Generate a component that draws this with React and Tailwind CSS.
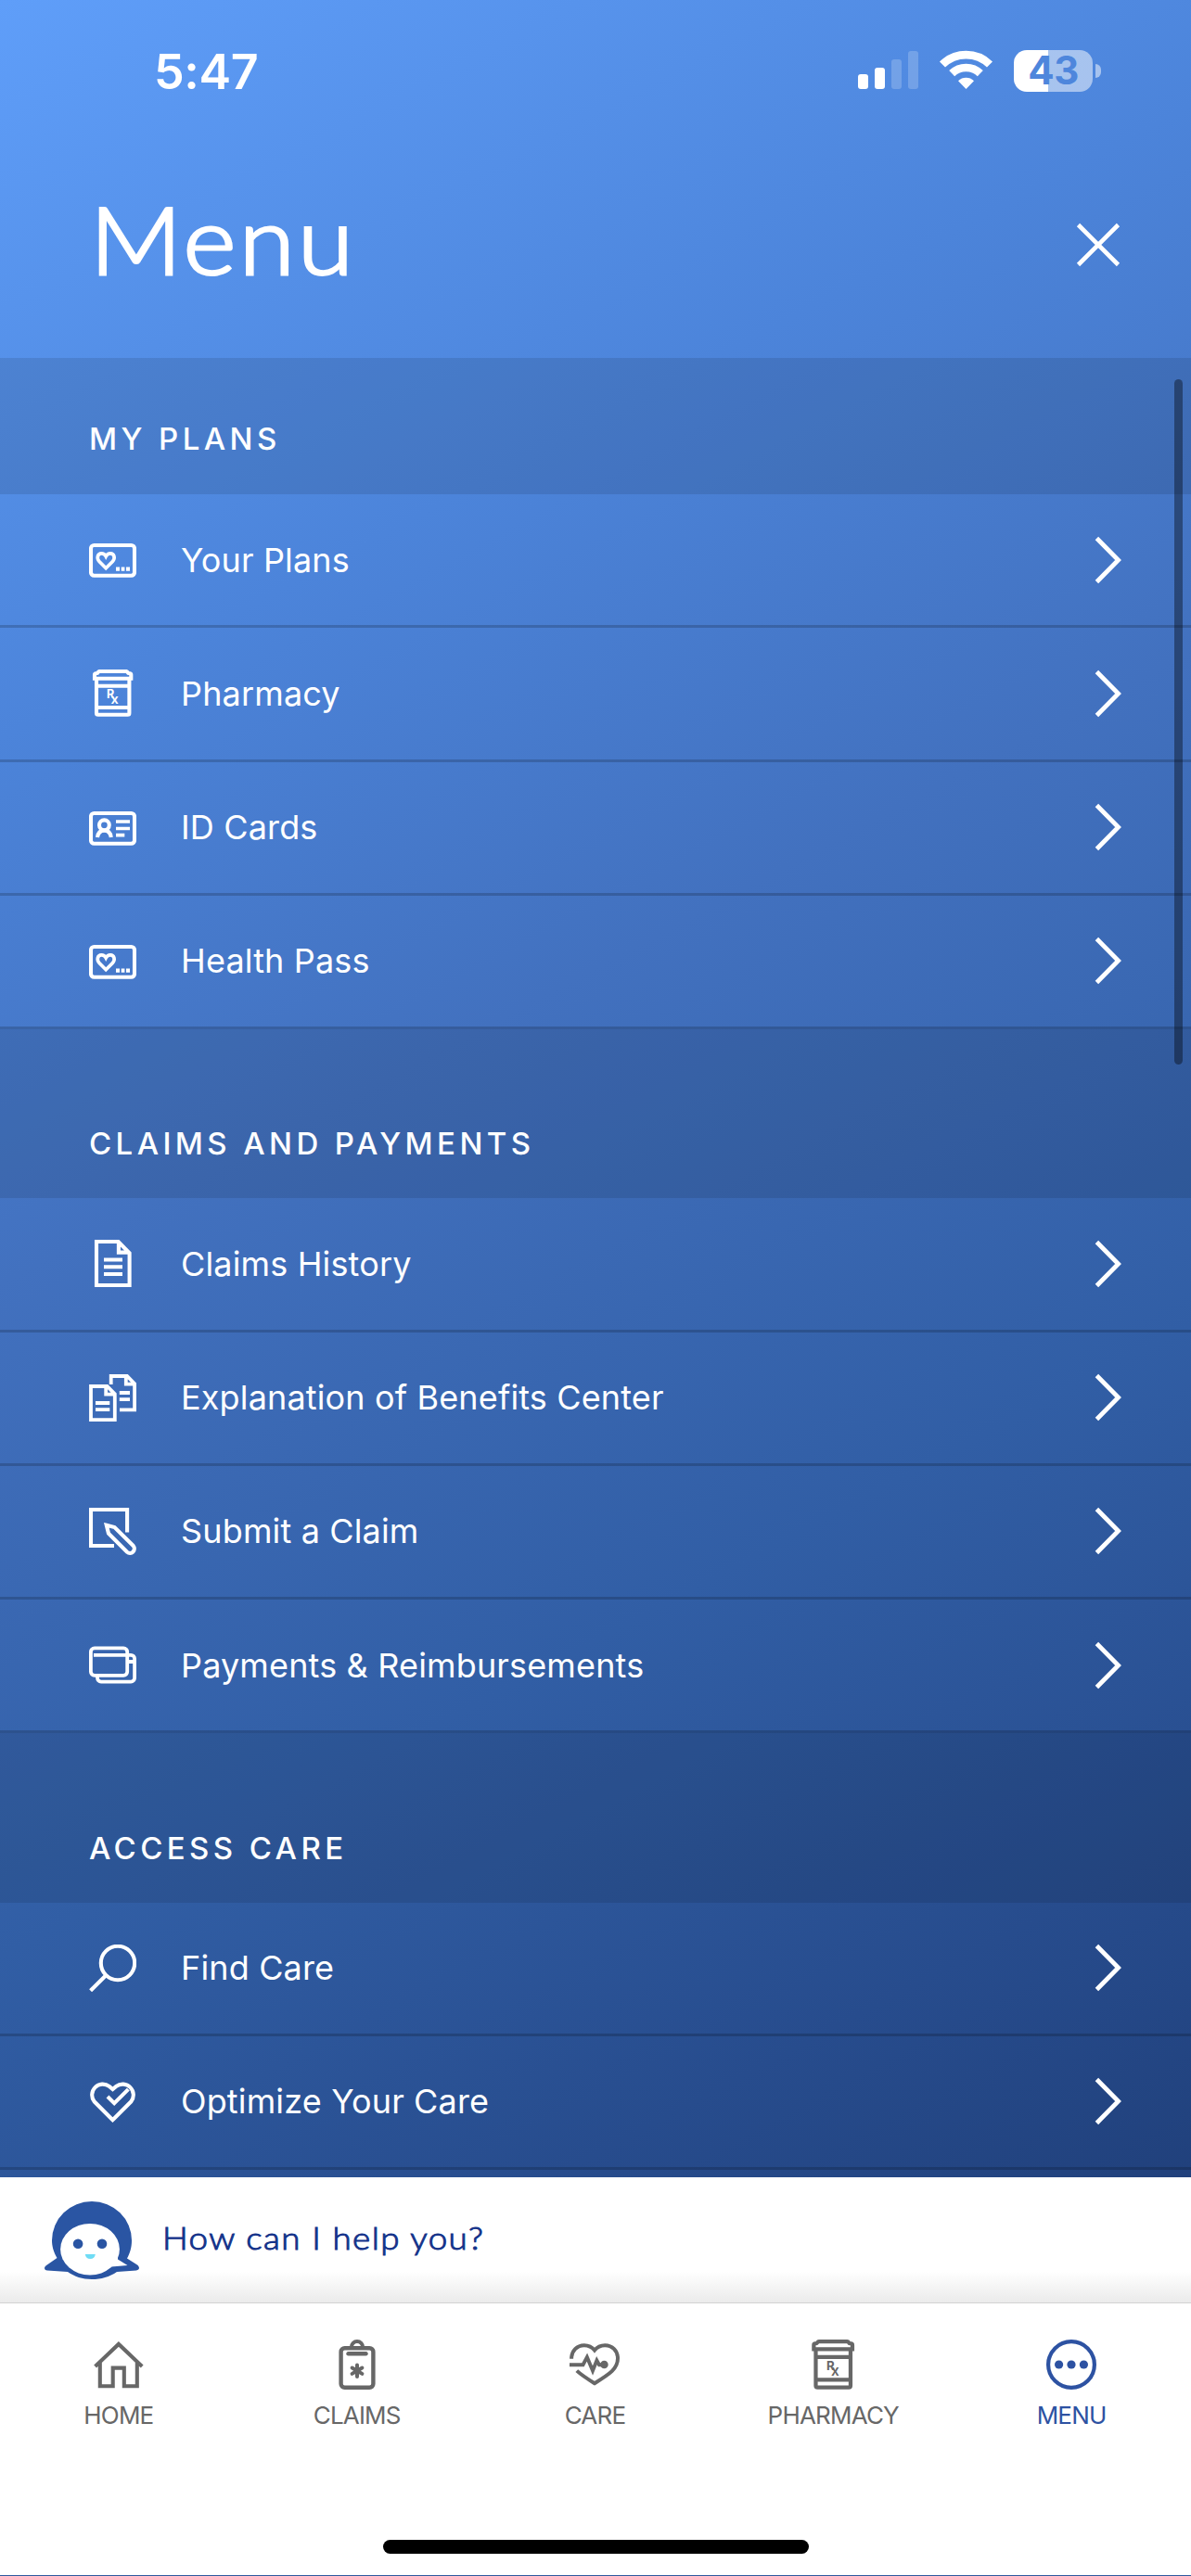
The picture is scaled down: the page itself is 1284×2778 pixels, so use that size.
import React from 'react';

function PlanCardIcon() {
  return (
    <>
      <rect x="2" y="10" width="47" height="32.8" rx="3.5" />
      <path d="M18.2 34.7 L11 27.5 C8 24.4 9 18.9 13.4 18.9 C15.8 18.9 17.3 20.3 18.2 22 C19.1 20.3 20.6 18.9 23 18.9 C27.4 18.9 28.4 24.4 25.4 27.5 Z" strokeWidth="3.7" />
      <path d="M29 35.6 h4 m1.7 0 h3.7 m1.6 0 h4" />
    </>
  );
}

function PharmacyIcon() {
  return (
    <>
      <path d="M6 11.7 V5.5 C6 4 7 4 8.5 4 C9.8 4 9.5 2 11.2 2 H40 C41.8 2 41.5 4 42.8 4 C44.3 4 45.3 4 45.3 5.5 V11.7" />
      <path d="M6 9.8 H45.3 M8 9.8 V47 C8 48.4 8.4 48.8 9.8 48.8 H41.6 C43 48.8 43.4 48.4 43.4 47 V9.8 M8 17.8 H43.4 M8 41 H43.4" />
      <text x="18.9" y="31.2" fontSize="12.5" fontWeight="700" fill="currentColor" stroke="none">R</text>
      <text x="23.6" y="37" fontSize="14.5" fontWeight="600" fill="currentColor" stroke="none">x</text>
    </>
  );
}

function IdCardIcon() {
  return (
    <>
      <rect x="2" y="10" width="47" height="32.8" rx="3.5" />
      <circle cx="16.4" cy="22.8" r="5.4" />
      <path d="M9 36 C9.6 31.5 12 28.6 16.4 28.6 C20.8 28.6 23.2 31.5 23.8 36" />
      <path d="M29 19 H44 M29 26.5 H44 M29 33.6 H38.3" strokeWidth="3.7" />
    </>
  );
}

function DocumentIcon() {
  return (
    <path d="M8 2 H31.5 L43.6 14.3 V49 H8 Z M31.9 2 V13.6 H43.6 M16 21.5 H36 M16 29.2 H36 M16 37 H36" />
  );
}

function DocumentsIcon() {
  return (
    <g strokeWidth="3.8">
      <path d="M23.7 11 V2 H41 L49.1 10.2 V38.3 H33 M39.8 2 V10.6 H49 M32.8 20 H44 M32.8 27.2 H44" />
      <path d="M2 13 H19.5 L27.8 21.3 V49.1 H2 Z M18.2 13 V21.6 H27.8 M7 31 H22.3 M7 38.2 H22.3" />
    </g>
  );
}

function SubmitIcon() {
  return (
    <>
      <path d="M41.1 26.5 V2 H2 V41 H27" />
      <path d="M18.8 18.8 L27.5 21 L47.7 41 A4.75 4.75 0 0 1 41 47.7 L21 27.6 Z" />
    </>
  );
}

function PaymentsIcon() {
  return (
    <g strokeWidth="3.8">
      <rect x="1.9" y="7.4" width="39.3" height="29.4" rx="4" />
      <path d="M5 14.8 H45 A4 4 0 0 1 49.1 18.8 V39.6 A4 4 0 0 1 45 43.6 H13 A4 4 0 0 1 9 39.6 V37 M42 22 H49" />
    </g>
  );
}

function SearchIcon() {
  return (
    <>
      <circle cx="31" cy="20" r="18.2" />
      <path d="M18.2 33.2 L1.6 49.8" />
    </>
  );
}

function HeartCheckIcon() {
  return (
    <>
      <path d="M25.5 45.2 L5.6 25.3 A11.6 11.6 0 0 1 21.7 8.9 L25.5 12 L29.3 8.9 A11.6 11.6 0 0 1 45.4 25.3 Z" />
      <path d="M20 20 L27.2 27.2 L42.3 12.1" />
    </>
  );
}

function HomeIcon() {
  return (
    <path d="M1.6 29 L26.9 4.9 L52.2 29 M6.8 25 V50.3 H20.7 V30.6 H32.8 V50.3 H46.8 V25" strokeWidth="4.1" />
  );
}

function ClipboardIcon() {
  return (
    <>
      <rect x="9.6" y="9.2" width="34.8" height="42.6" rx="4" strokeWidth="4.4" />
      <path d="M20.8 8.5 A6.2 6.4 0 0 1 33.2 8.5" strokeWidth="4" />
      <path d="M17.5 15.3 H36.5" strokeWidth="4.4" strokeLinecap="round" />
      <path d="M27 27.4 V40 M21.6 30.5 L32.4 36.9 M32.4 30.5 L21.6 36.9" strokeWidth="4" strokeLinecap="round" />
    </>
  );
}

function CareIcon() {
  return (
    <>
      <path d="M2.1 20.8 C2.1 12 8.3 6.2 15.8 6.2 C20.3 6.2 24.4 8.3 27 11.6 C29.6 8.3 33.7 6.2 38.2 6.2 C46 6.2 52 12 52 20.3 C52 31.5 43.5 37 27 47.2 C19.5 42.5 13 38.4 7.8 33.6" />
      <path d="M0 27.2 H14.5 L18.9 19 L25 33.5 L29.4 22.5 L32 27.2 H37" strokeWidth="3.9" />
      <circle cx="37.4" cy="27" r="4.3" fill="currentColor" stroke="none" />
    </>
  );
}

function MoreIcon() {
  return (
    <>
      <circle cx="27" cy="27" r="24.9" strokeWidth="4.2" />
      <g fill="currentColor" stroke="none">
        <circle cx="13.6" cy="27" r="4.6" />
        <circle cx="27" cy="27" r="4.6" />
        <circle cx="40.4" cy="27" r="4.6" />
      </g>
    </>
  );
}

const sections = [
  {
    title: 'MY PLANS',
    items: [
      { label: 'Your Plans', Icon: PlanCardIcon },
      { label: 'Pharmacy', Icon: PharmacyIcon },
      { label: 'ID Cards', Icon: IdCardIcon },
      { label: 'Health Pass', Icon: PlanCardIcon },
    ],
  },
  {
    title: 'CLAIMS AND PAYMENTS',
    items: [
      { label: 'Claims History', Icon: DocumentIcon },
      { label: 'Explanation of Benefits Center', Icon: DocumentsIcon },
      { label: 'Submit a Claim', Icon: SubmitIcon },
      { label: 'Payments & Reimbursements', Icon: PaymentsIcon },
    ],
  },
  {
    title: 'ACCESS CARE',
    items: [
      { label: 'Find Care', Icon: SearchIcon },
      { label: 'Optimize Your Care', Icon: HeartCheckIcon },
    ],
  },
];

const tabs = [
  { label: 'HOME', Icon: HomeIcon, viewBox: '0 0 54 54' },
  { label: 'CLAIMS', Icon: ClipboardIcon, viewBox: '0 0 54 54' },
  { label: 'CARE', Icon: CareIcon, viewBox: '0 0 54 54' },
  { label: 'PHARMACY', Icon: PharmacyIcon, viewBox: '0 0 51 51' },
  { label: 'MENU', Icon: MoreIcon, viewBox: '0 0 54 54', active: true },
];

function StatusBar() {
  return (
    <div className="flex h-[152px] items-center justify-between pr-[97px] pl-[166px]">
      <span className="pt-[3px] text-[52px] leading-none font-semibold tracking-[-0.4px] text-white">5:47</span>
      <div className="flex items-center">
        <svg className="h-[44px] w-[66px]" viewBox="0 0 66 44" fill="white">
          <rect x="0" y="26" width="11" height="16" rx="3" />
          <rect x="18" y="19" width="11" height="23" rx="3" />
          <rect x="36" y="10" width="11" height="32" rx="3" opacity="0.2" />
          <rect x="54" y="1" width="11" height="41" rx="3" opacity="0.2" />
        </svg>
        <svg className="ml-[21px] h-[44px] w-[59px]" viewBox="0 0 59 44" fill="none" stroke="white">
          <path d="M4 15.5 A36.5 36.5 0 0 1 55 15.5" strokeWidth="8.6" />
          <path d="M14.2 25.2 A22 22 0 0 1 44.8 25.2" strokeWidth="8.6" />
          <path d="M29.5 42 L21 33.2 A12.4 12.4 0 0 1 38 33.2 Z" fill="white" stroke="none" />
        </svg>
        <div className="ml-[22px] flex h-[45px] w-[85px] items-center justify-center rounded-[14px] bg-[linear-gradient(90deg,#ffffff_37px,#ffffff80_37px)]">
          <span className="text-[42px] leading-[44px] font-bold tracking-[-0.5px] text-[#4e86dc]">43</span>
        </div>
        <div className="ml-[3px] h-[15px] w-[6px] rounded-r-full bg-white/50"></div>
      </div>
    </div>
  );
}

function MenuRow({ label, Icon }) {
  return (
    <div className="flex h-[144.25px] items-center border-b-3 border-black/18 pr-[73px] pl-[96px]">
      <svg className="h-[51px] w-[51px] shrink-0" viewBox="0 0 51 51" fill="none" stroke="currentColor" strokeWidth="4.1">
        <Icon />
      </svg>
      <span className="ml-[48px] flex-1 text-[36px] leading-none tracking-[0.15px]">{label}</span>
      <svg className="h-[52px] w-[31px]" viewBox="0 0 31 52" fill="none" stroke="currentColor" strokeWidth="4.8">
        <path d="M2.4 2.5 L25.6 26 L2.4 49.5" />
      </svg>
    </div>
  );
}

function ChatBar() {
  return (
    <div className="flex h-[135px] items-center bg-white bg-linear-to-b from-white from-75% to-[#ebebeb] pl-[48px]">
      <svg className="h-[84px] w-[102px]" viewBox="0 0 102 84">
        <path
          d="M13.5 61 C9.5 54 8 48 8 42 A43 42 0 0 1 94 42 C94 50 92 56 89 61.5 L100 68.5 C103 71 102.5 74 99 74.5 L78 76 C70 81.5 61 84 51 84 C41 84 32 81 25 76 L3 74.5 C-0.5 74 -1 71 2 69 Z"
          fill="#2a55a3"
        />
        <ellipse cx="49" cy="51.7" rx="31.9" ry="27.8" fill="white" />
        <path d="M79 58 V62.5 L89.5 69 L72 70.5 L66 66 Z" fill="white" />
        <circle cx="36.1" cy="45.7" r="5.3" fill="#2a55a3" />
        <circle cx="62" cy="45.7" r="5.3" fill="#2a55a3" />
        <path d="M43.8 57 H54.8 C54.3 60.5 52.5 62 49.3 62 C46.1 62 44.3 60.5 43.8 57 Z" fill="#6fdcf5" />
      </svg>
      <span className="mb-[5px] ml-[25px] origin-left scale-x-108 font-['Lato',sans-serif] text-[34px] leading-none font-light tracking-[1.3px] text-[#14338a] [-webkit-text-stroke:1px_#14338a]">
        How can I help you?
      </span>
    </div>
  );
}

function TabBar() {
  return (
    <div className="flex h-[295px] flex-col items-center border-t border-b border-t-[#d2d2d2] border-b-[#2f5a9f] bg-white">
      <div className="flex w-full pt-[39px]">
        {tabs.map(({ label, Icon, viewBox, active }) => (
          <div key={label} className={`flex flex-1 flex-col items-center ${active ? 'text-[#2d52a2]' : 'text-[#676767]'}`}>
            <svg className="mr-[1px] h-[54px] w-[54px]" viewBox={viewBox} fill="none" stroke="currentColor" strokeWidth="4">
              <Icon />
            </svg>
            <span className="mt-[15px] mr-[1px] text-[26px] leading-[26px] tracking-[-0.8px]">{label}</span>
          </div>
        ))}
      </div>
      <div className="mt-auto mb-[23px] h-[15px] w-[459px] rounded-full bg-black"></div>
    </div>
  );
}

function App() {
  return (
    <div className="flex h-[2778px] w-[1284px] flex-col overflow-hidden bg-[linear-gradient(152deg,#5f9ef9_0%,#4c84da_23%,#4271bf_40%,#315ea5_61%,#274c8d_77%,#1f3e78_90%,#1b366b_100%)] font-['Inter',sans-serif] text-white">
      <header className="h-[386px] shrink-0">
        <StatusBar />
        <div className="flex h-[224px] items-center justify-between pr-[76px] pl-[97px]">
          <h1 className="mb-[13px] origin-left scale-x-108 font-['Lato',sans-serif] text-[101px] leading-none font-light tracking-[3px] [-webkit-text-stroke:3px_white]">Menu</h1>
          <svg className="h-[48px] w-[48px]" viewBox="0 0 48 48" fill="none" stroke="white" strokeWidth="4.6">
            <path d="M2.5 2.5 L45.5 45.5 M45.5 2.5 L2.5 45.5" />
          </svg>
        </div>
      </header>

      <main className="relative h-[1962px] shrink-0 overflow-hidden">
        {sections.map(({ title, items }, index) => (
          <section key={title}>
            <div className={`flex items-end bg-black/10 pl-[96px] ${index === 0 ? 'h-[147px] pb-[43px]' : 'h-[182.3px] pb-[42px]'}`}>
              <h2 className="text-[33px] leading-[34px] font-medium tracking-[4.4px]">{title}</h2>
            </div>
            {items.map((item) => (
              <MenuRow key={item.label} {...item} />
            ))}
          </section>
        ))}
        {/* Scroll indicator */}
        <div className="absolute top-[23px] right-[9px] h-[739px] w-[9px] rounded-full bg-black/38"></div>
      </main>

      <ChatBar />
      <TabBar />
    </div>
  );
}

export default App;
